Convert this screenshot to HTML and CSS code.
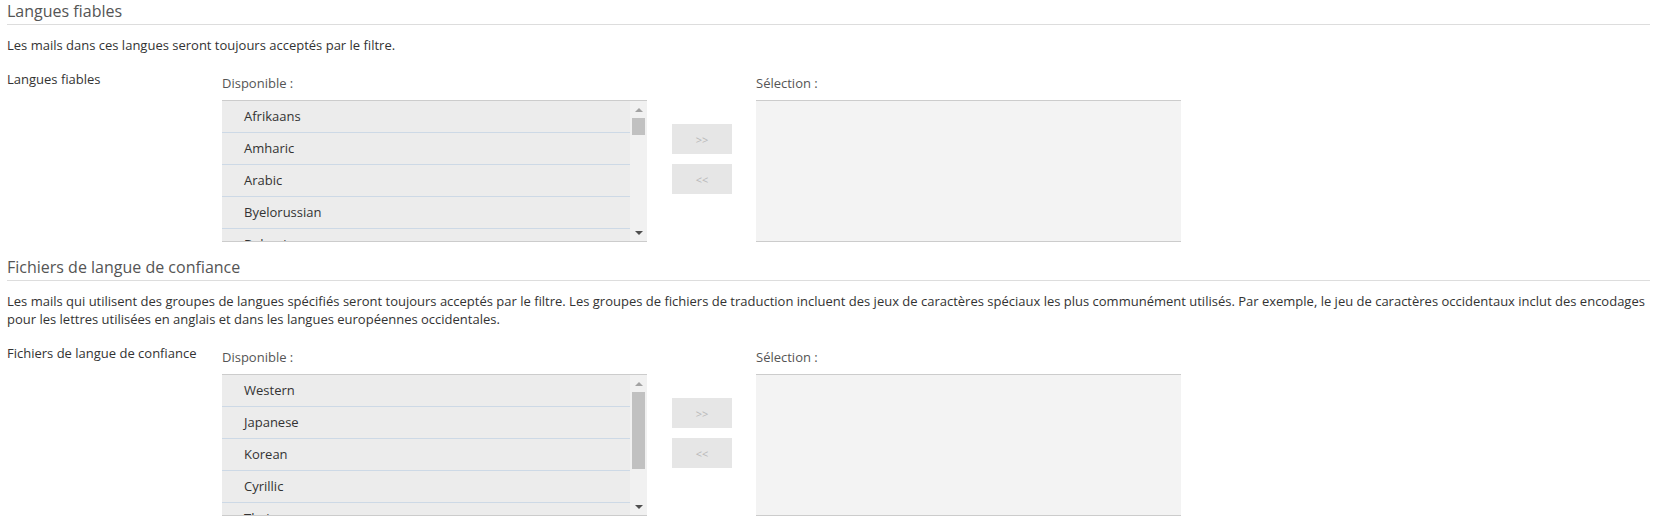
FILE: index.html
```html
<!DOCTYPE html>
<html lang="fr">
<head>
    <meta charset="UTF-8">
    <title>Langues fiables</title>
    <link rel="stylesheet" href="styles.css">
</head>
<body>
    <div class="page">
        <!-- Langues fiables -->
        <section class="section">
            <h2 class="section-title">Langues fiables</h2>
            <p class="section-desc">Les mails dans ces langues seront toujours acceptés par le filtre.</p>
            <div class="field-row">
                <div class="field-label">Langues fiables</div>
                <div class="picker-col">
                    <div class="picker-label">Disponible :</div>
                    <div class="listbox">
                        <ul class="listbox-items">
                            <li>Afrikaans</li>
                            <li>Amharic</li>
                            <li>Arabic</li>
                            <li>Byelorussian</li>
                            <li>Bulgarian</li>
                            <li>Catalan</li>
                            <li>Chinese</li>
                            <li>Croatian</li>
                            <li>Czech</li>
                            <li>Danish</li>
                        </ul>
                        <div class="scrollbar">
                            <div class="scroll-btn up"><span class="arrow-up off"></span></div>
                            <div class="scroll-track">
                                <div class="scroll-thumb" style="height: 17px;"></div>
                            </div>
                            <div class="scroll-btn down"><span class="arrow-down"></span></div>
                        </div>
                    </div>
                </div>
                <div class="move-col">
                    <button type="button" class="move-btn">&gt;&gt;</button>
                    <button type="button" class="move-btn">&lt;&lt;</button>
                </div>
                <div class="picker-col">
                    <div class="picker-label">Sélection :</div>
                    <div class="listbox selected"></div>
                </div>
            </div>
        </section>

        <!-- Fichiers de langue de confiance -->
        <section class="section">
            <h2 class="section-title">Fichiers de langue de confiance</h2>
            <p class="section-desc">Les mails qui utilisent des groupes de langues spécifiés seront toujours acceptés par le filtre. Les groupes de fichiers de traduction incluent des jeux de caractères spéciaux les plus communément utilisés. Par exemple, le jeu de caractères occidentaux inclut des encodages pour les lettres utilisées en anglais et dans les langues européennes occidentales.</p>
            <div class="field-row">
                <div class="field-label">Fichiers de langue de confiance</div>
                <div class="picker-col">
                    <div class="picker-label">Disponible :</div>
                    <div class="listbox">
                        <ul class="listbox-items">
                            <li>Western</li>
                            <li>Japanese</li>
                            <li>Korean</li>
                            <li>Cyrillic</li>
                            <li>Thai</li>
                            <li>Chinese</li>
                        </ul>
                        <div class="scrollbar">
                            <div class="scroll-btn up"><span class="arrow-up off"></span></div>
                            <div class="scroll-track">
                                <div class="scroll-thumb" style="height: 77px;"></div>
                            </div>
                            <div class="scroll-btn down"><span class="arrow-down"></span></div>
                        </div>
                    </div>
                </div>
                <div class="move-col">
                    <button type="button" class="move-btn">&gt;&gt;</button>
                    <button type="button" class="move-btn">&lt;&lt;</button>
                </div>
                <div class="picker-col">
                    <div class="picker-label">Sélection :</div>
                    <div class="listbox selected"></div>
                </div>
            </div>
        </section>
    </div>
</body>
</html>
```

FILE: styles.css
```css
/* General Styles */
body {
    margin: 0;
    font-family: 'Open Sans', sans-serif;
    font-size: 13px;
    color: #333;
    background: #fff;
    overflow: hidden;
}

.page {
    padding: 0 4px 0 7px;
}

/* Section Styles */
.section + .section {
    margin-top: 14px;
}

.section-title {
    margin: 0;
    padding-bottom: 2px;
    font-size: 16px;
    font-weight: 400;
    line-height: 22px;
    color: #555;
    border-bottom: 1px solid #ddd;
}

.section-desc {
    margin: 11px 0 0;
    line-height: 18px;
}

/* Field Row */
.field-row {
    display: flex;
    margin-top: 16px;
}

.field-label {
    width: 215px;
    flex: none;
    line-height: 18px;
}

.picker-col {
    width: 425px;
    flex: none;
    padding-top: 4px;
}

.picker-label {
    line-height: 18px;
    color: #555;
    margin-bottom: 8px;
}

/* List Box */
.listbox {
    display: flex;
    height: 140px;
    border-top: 1px solid #ccc;
    border-bottom: 1px solid #ccc;
    background: #ececec;
    overflow: hidden;
}

.listbox.selected {
    background: #f3f3f3;
}

.listbox-items {
    flex: 1;
    margin: 0;
    padding: 0;
    list-style: none;
}

.listbox-items li {
    height: 31px;
    line-height: 31px;
    padding-left: 22px;
    border-bottom: 1px solid #cdd9e6;
    color: #333;
}

/* Fake scrollbar */
.scrollbar {
    width: 17px;
    flex: none;
    display: flex;
    flex-direction: column;
    background: #f1f1f1;
}

.scroll-btn {
    height: 17px;
    display: flex;
    justify-content: center;
    align-items: center;
}

.scroll-track {
    flex: 1;
}

.scroll-thumb {
    margin: 0 2px;
    background: #c1c1c1;
}

.arrow-up {
    width: 0;
    height: 0;
    border-left: 4px solid transparent;
    border-right: 4px solid transparent;
    border-bottom: 4px solid #505050;
}

.arrow-up.off {
    border-bottom-color: #a3a3a3;
}

.arrow-down {
    width: 0;
    height: 0;
    border-left: 4px solid transparent;
    border-right: 4px solid transparent;
    border-top: 4px solid #505050;
}

/* Move buttons */
.move-col {
    width: 60px;
    flex: none;
    margin: 0 24px 0 25px;
    padding-top: 54px;
    display: flex;
    flex-direction: column;
    gap: 10px;
}

.move-btn {
    height: 30px;
    border: none;
    padding: 0;
    background: #e6e6e6;
    color: #b8b8b8;
    font-family: 'Open Sans', sans-serif;
    font-size: 11px;
}
```
